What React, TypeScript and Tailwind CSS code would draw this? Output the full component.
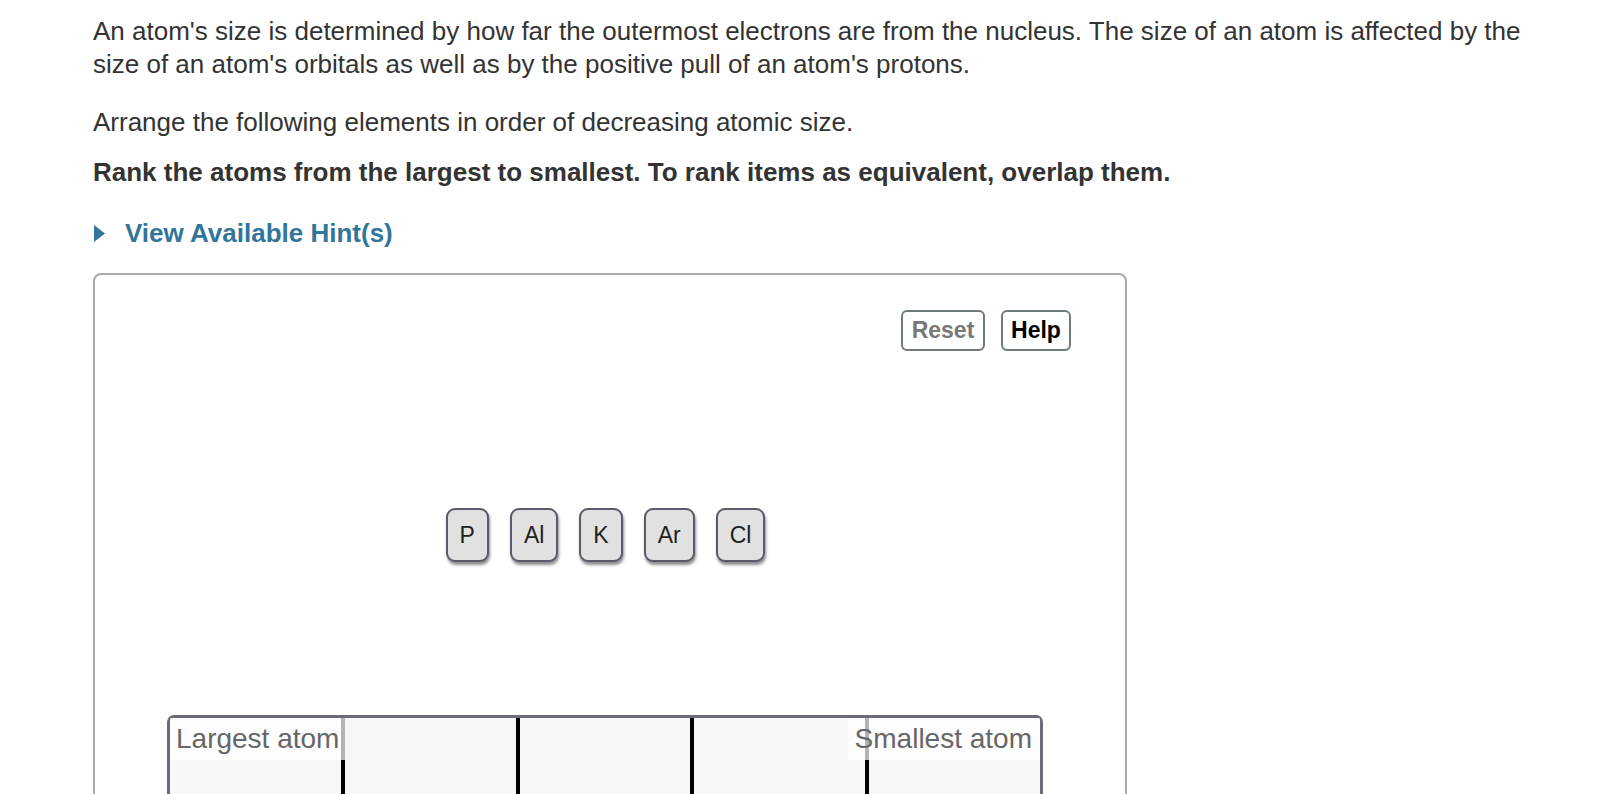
import React from 'react';

const atoms = ['P', 'Al', 'K', 'Ar', 'Cl'];

function AtomTile({ label }: { label: string }) {
  return (
    <div className="flex h-[54px] min-w-[43px] items-center justify-center rounded-[9px] border-2 border-[#5a5a68] bg-[#e1e1e1] px-[12px] text-[23px] text-[#222] shadow-[1px_3px_3px_rgba(0,0,0,0.45)]">
      {label}
    </div>
  );
}

function RankingBox() {
  return (
    <div className="relative ml-[72px] flex h-[230px] w-[876px] rounded-t-[7px] border-[3px] border-[#6b6b7b] bg-[#f7f7f7]">
      <div className="flex-1" />
      <div className="w-[4px] bg-black" />
      <div className="flex-1" />
      <div className="w-[4px] bg-black" />
      <div className="flex-1" />
      <div className="w-[4px] bg-black" />
      <div className="flex-1" />
      <div className="w-[4px] bg-black" />
      <div className="flex-1" />

      <div className="absolute left-0 top-0 flex h-[42px] items-center bg-white/70 pl-[6px] pr-[6px] text-[28px] text-[#666]">
        Largest atom
      </div>
      <div className="absolute right-0 top-0 flex h-[42px] items-center bg-white/70 pl-[7px] pr-[8px] text-[28px] text-[#666]">
        Smallest atom
      </div>
    </div>
  );
}

export default function App() {
  return (
    <div
      className="h-[794px] overflow-hidden bg-white pl-[93px] pt-[15px] text-[#333]"
      style={{ fontFamily: '"Liberation Sans", Arial, Helvetica, sans-serif' }}
    >
      <p className="w-[1450px] text-[26px] leading-[33px]">
        An atom's size is determined by how far the outermost electrons are from the nucleus. The size of an atom is
        affected by the size of an atom's orbitals as well as by the positive pull of an atom's protons.
      </p>
      <p className="mt-[25px] text-[26px] leading-[33px]">
        Arrange the following elements in order of decreasing atomic size.
      </p>
      <p className="mt-[17px] text-[26px] font-bold leading-[33px]">
        Rank the atoms from the largest to smallest. To rank items as equivalent, overlap them.
      </p>

      <div className="mt-[28px] flex items-center text-[26px] font-bold leading-[33px] text-[#31759a]">
        <svg width="11" height="17" viewBox="0 0 11 17" className="ml-[1px]">
          <polygon points="0,0 11,8.5 0,17" fill="#31759a" />
        </svg>
        <span className="ml-[20px]">View Available Hint(s)</span>
      </div>

      <div className="mt-[23px] w-[1034px] rounded-[8px] border-2 border-[#aaaaaa] pb-[40px]">
        <div className="flex justify-end gap-[16px] pr-[54px] pt-[35px]">
          <button className="h-[41px] w-[84px] rounded-[6px] border-2 border-[#6f7a7e] bg-white text-[23px] font-bold text-[#777]">
            Reset
          </button>
          <button className="h-[41px] w-[70px] rounded-[6px] border-2 border-[#6f7a7e] bg-white text-[23px] font-bold text-black">
            Help
          </button>
        </div>

        <div className="mt-[157px] flex justify-center gap-[21px] pr-[9px]">
          {atoms.map((a) => (
            <AtomTile key={a} label={a} />
          ))}
        </div>

        <div className="mt-[153px]">
          <RankingBox />
        </div>
      </div>
    </div>
  );
}
